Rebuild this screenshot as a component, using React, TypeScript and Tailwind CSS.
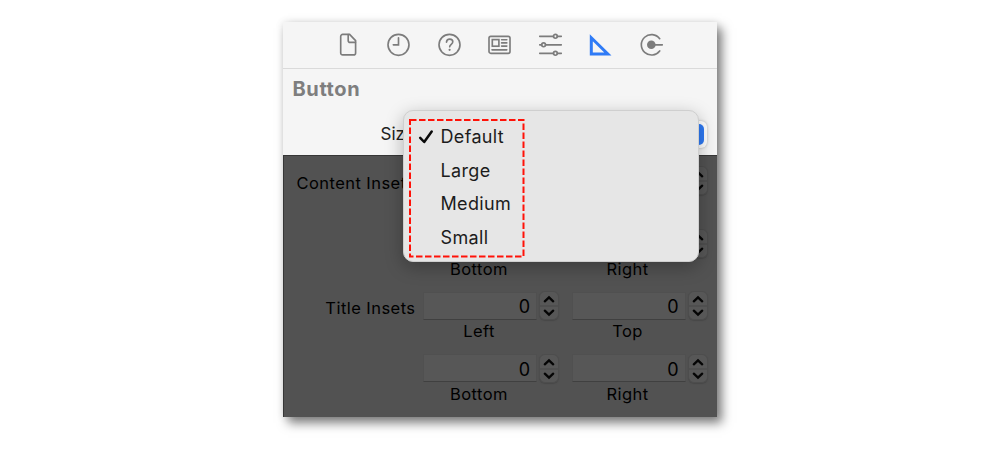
import React from "react";

const toolIcons: { name: string; art: React.ReactNode }[] = [
  {
    name: "File",
    art: (
      <>
        <path d="M5.700 1.400h6.900l6 6.300v12.200a2 2 0 0 1-2 2H5.700a2 2 0 0 1-2-2V3.400a2 2 0 0 1 2-2z" />
        <path d="M11.200 1.600v5.800a2 2 0 0 0 2 2h5.200" />
      </>
    ),
  },
  {
    name: "History",
    art: (
      <>
        <circle cx="11.500" cy="11.800" r="10.500" />
        <path d="M11.500 4.800v7H6.300" />
      </>
    ),
  },
  {
    name: "Help",
    art: (
      <>
        <circle cx="11.500" cy="11.800" r="10.500" />
        <path d="M8.500 9.100c.1-1.900 1.300-3 3.200-3 1.800 0 3.100 1 3.100 2.700 0 2.500-3.100 2.500-3.100 5" />
        <circle cx="11.600" cy="16.800" r="1.100" fill="currentColor" stroke="none" />
      </>
    ),
  },
  {
    name: "Identity",
    art: (
      <>
        <rect x="1" y="3.300" width="21" height="17" rx="1.800" />
        <rect x="4.300" y="6.600" width="6.600" height="6.600" />
        <path d="M13.600 6.700h5.200M13.600 9.900h5.200M13.600 13.100h5.200M4 16.800h14.800" />
      </>
    ),
  },
  {
    name: "Attributes",
    art: (
      <>
        <path d="M.7 3.300h13.800M18.300 3.300h4M.7 11.800h2M6.500 11.800h15.800M.7 20.300h13.800M18.300 20.300h4" />
        <circle cx="16.400" cy="3.300" r="1.900" />
        <circle cx="4.600" cy="11.800" r="1.900" />
        <circle cx="16.400" cy="20.300" r="1.900" />
      </>
    ),
  },
  {
    name: "Size",
    art: <path d="M2.300 4.700v16.200h16.500z" stroke="#2f7bf6" strokeWidth="3" />,
  },
  {
    name: "Connections",
    art: (
      <>
        <path d="M19.700 5.700a10.200 10.200 0 1 0 0 12.200M11.500 11.800h10.800" />
        <circle cx="11.300" cy="11.800" r="4.300" fill="currentColor" stroke="none" />
      </>
    ),
  },
];

function Stepper() {
  return (
    <div className="h-[29px] w-[20px] rounded-md border border-[#4d4d4d] bg-[#575757] shadow-[0_1px_1px_#484848]">
      <svg viewBox="0 0 18 27" className="h-full w-full" fill="none" stroke="#050505" strokeWidth="2.300">
        <path d="M0 14h18" stroke="#484848" strokeWidth="1" />
        <path d="M4.800 9.300l4.200-4 4.200 4M4.800 18.700l4.200 4 4.200-4" strokeLinecap="round" />
      </svg>
    </div>
  );
}

function Field({ label }: { label?: string }) {
  return (
    <div className="h-[62.500px] w-[136px]">
      <div className="flex items-center gap-[2px]">
        <div className="flex h-[28px] w-[114px] items-center justify-end border border-b-[#404040] border-x-[#505050] border-t-[#505050] bg-[#575757] pr-[6px] pt-[2px] text-[18px] tracking-normal">
          {label && "0"}
        </div>
        <Stepper />
      </div>
      <div className="w-[112px] text-center leading-[22px]">{label}</div>
    </div>
  );
}

function FieldRow({ title, labels = [] }: { title?: string; labels?: string[] }) {
  return (
    <div className="flex pr-[8px]">
      <div className="w-[131.500px] whitespace-nowrap pt-[5px] text-right leading-[24px]">{title}</div>
      <div className="ml-[7.500px] flex gap-[12.500px]">
        <Field label={labels[0]} />
        <Field label={labels[1]} />
      </div>
    </div>
  );
}

function SizeMenu() {
  return (
    <div className="absolute left-[120px] top-[88px] h-[152px] w-[296px] rounded-[10px] border border-[#cfcfcf] bg-[#e6e6e6] pt-[9px] text-[18px] tracking-[0.350px] text-[#1c1c1c] shadow-[0_5px_18px_rgba(0,0,0,0.28)]">
      {["Default", "Large", "Medium", "Small"].map((item, i) => (
        <div key={item} className="flex h-[33.500px] items-center pl-[14px]">
          <div className="w-[22.500px]">
            {i === 0 && (
              <svg viewBox="0 0 16 16" className="h-4 w-4" fill="none" stroke="#0a0a0a" strokeWidth="2.500" strokeLinecap="round" strokeLinejoin="round">
                <path d="M2.200 8.800l4 4.200L13.700 2.500" />
              </svg>
            )}
          </div>
          {item}
        </div>
      ))}
      <svg className="absolute left-[5px] top-[7.500px] h-[139px] w-[117px]" fill="none" stroke="#ff1208" strokeWidth="2">
        <rect x="1" y="1" width="113.500" height="136.500" strokeDasharray="6.500 2.500" />
      </svg>
    </div>
  );
}

export default function App() {
  return (
    <main className="flex h-[459px] w-[1000px] bg-white pl-[283px] pt-[22px] font-['Inter',sans-serif] text-[16.500px] text-black">
      <section className="relative flex h-[395px] w-[434px] flex-col bg-[#f5f5f5] shadow-[5px_6px_10px_rgba(0,0,0,0.5),0_0_8px_rgba(0,0,0,0.1)]">
        <header className="flex h-[47px] items-center border-b border-[#dadada] pl-[53.500px] text-[#7c7c7c]">
          {toolIcons.map(({ name, art }) => (
            <div key={name} className="w-[50.600px]">
              <svg viewBox="0 0 23 24" className="h-[24px] w-[23px]" fill="none" stroke="currentColor" strokeWidth="1.650" strokeLinecap="round" aria-label={name}>
                {art}
              </svg>
            </div>
          ))}
        </header>
        <h1 className="pl-[9.500px] pt-[6px] text-[20px] font-bold leading-[28px] tracking-[0.600px] text-[#7e7e7e]">Button</h1>
        <div className="flex flex-1 items-center justify-between pl-[97.500px] pr-[10px] pt-[11px] text-[#222]">
          <span className="text-[17px]">Size</span>
          <div className="flex h-[27px] w-[296px] justify-end rounded-md bg-white p-[3px] shadow-[0_0_3px_rgba(0,0,0,0.25)]">
            <div className="w-[21px] rounded-[5px] bg-[#2f7bf6]" />
          </div>
        </div>
        <div className="h-[262px] border-l border-t border-[#363636] bg-[#525252] pt-[10px] tracking-[0.450px]">
          <FieldRow title="Content Insets" />
          <FieldRow labels={["Bottom", "Right"]} />
          <FieldRow title="Title Insets" labels={["Left", "Top"]} />
          <FieldRow labels={["Bottom", "Right"]} />
        </div>
        <SizeMenu />
      </section>
    </main>
  );
}
